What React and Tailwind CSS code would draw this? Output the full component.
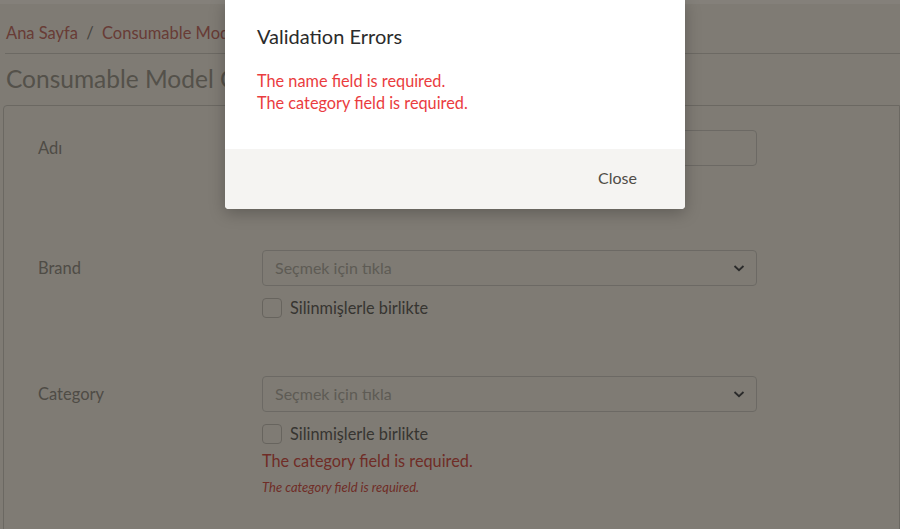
import React from 'react';

const font = { fontFamily: 'Lato, "Open Sans", sans-serif' };

const Chevron = () => (
  <svg width="12" height="12" viewBox="0 0 12 12" className="text-[#555]">
    <path d="M1.5 4 L6 8.2 L10.5 4" fill="none" stroke="currentColor" strokeWidth="1.8" />
  </svg>
);

const SelectField = () => (
  <div className="h-[36px] w-[495px] border border-[#d9d3c8] rounded flex items-center justify-between pl-3 pr-[11px]">
    <span className="text-[16px] text-[#bdb6aa]">Seçmek için tıkla</span>
    <Chevron />
  </div>
);

const DeletedCheckbox = () => (
  <label className="flex items-center gap-2 mt-[12px] h-[20px]">
    <span className="w-[20px] h-[20px] border border-[#cfc8bc] rounded bg-[#fef7e9]" />
    <span className="text-[16.3px] text-[#6e6a63]">Silinmişlerle birlikte</span>
  </label>
);

export default function App() {
  return (
    <div className="relative w-full h-[529px] overflow-hidden bg-[#fef7e9]" style={font}>
      <div className="h-1" />
      {/* breadcrumb */}
      <div className="pt-[17px] h-[50px] text-[16.5px] text-[#d0786c] border-b border-[#d8d2c6] ml-[5px]">
        <span className="ml-px">Ana Sayfa</span> <span className="text-[#8e8980] mx-1">/</span> Consumable Model Create
      </div>
      <h1 className="pl-[6px] pt-[10px] h-[51px] text-[24.5px] text-[#a8a294] leading-[30px]">
        Consumable Model Create
      </h1>

      <div className="ml-[3px] border border-[#d6d0c4] rounded-tl-[4px] h-[440px] pt-[24px]">
        <div className="flex">
          <div className="w-[258px] pl-[34px] pt-[6px] text-[16.5px] text-[#9e988c]">Adı</div>
          <div className="h-[36px] w-[495px] border border-[#d9d3c8] rounded" />
        </div>

        <div className="flex mt-[84px]">
          <div className="w-[258px] pl-[34px] pt-[6px] text-[16.5px] text-[#9e988c]">Brand</div>
          <div>
            <SelectField />
            <DeletedCheckbox />
          </div>
        </div>

        <div className="flex mt-[58px]">
          <div className="w-[258px] pl-[34px] pt-[6px] text-[16.5px] text-[#9e988c]">Category</div>
          <div>
            <SelectField />
            <DeletedCheckbox />
            <p className="mt-[5px] text-[16.3px] text-[#e05a4e]">The category field is required.</p>
            <p className="mt-[5px] text-[13px] italic text-[#e05a4e]">The category field is required.</p>
          </div>
        </div>
      </div>

      {/* modal overlay */}
      <div className="absolute inset-x-0 top-0 h-1 bg-[#84807a]" />
      <div className="absolute inset-0 top-1 bg-black/50" />
      <div className="absolute left-[225px] top-0 w-[460px] rounded-b-[4px] overflow-hidden bg-white shadow-[0_4px_16px_rgba(0,0,0,0.25)]">
        <div className="h-[149px] px-8 pt-[24px]">
          <h2 className="text-[20px] text-[#2b2b2b] leading-[24px]">Validation Errors</h2>
          <div className="mt-[22px] text-[16.3px] leading-[22px] text-[#ea3c40]">
            <p>The name field is required.</p>
            <p>The category field is required.</p>
          </div>
        </div>
        <div className="h-[60px] bg-[#f5f4f2] flex items-center justify-end pr-[48px]">
          <button className="text-[16px] text-[#4f4c47] leading-[20px] -mt-[2px]">Close</button>
        </div>
      </div>
    </div>
  );
}
